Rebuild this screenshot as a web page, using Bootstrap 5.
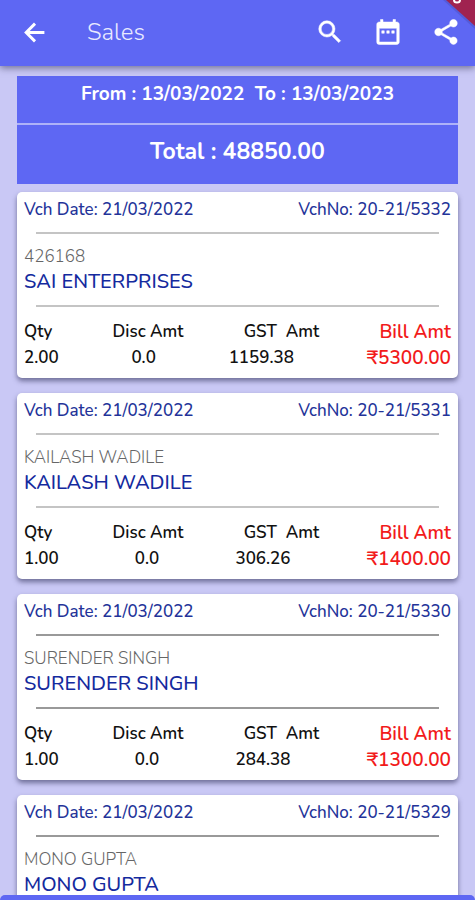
<!DOCTYPE html>
<html lang="en">
<head>
<meta charset="utf-8">
<meta name="viewport" content="width=device-width, initial-scale=1">
<title>Sales</title>
<link href="https://cdn.jsdelivr.net/npm/bootstrap@5.3.0/dist/css/bootstrap.min.css" rel="stylesheet">
<style>
  body { font-family: Nunito, "Open Sans", "Noto Sans", sans-serif; background: #c9c8f5; }
  .bg-brand { background: #5e67f3; }
  .app-header { height: 66px; padding: 0 14px 0 22px; box-shadow: 0 2px 7px rgba(40, 40, 70, .55); z-index: 2; }
  .app-header h1 { font-size: 24px; line-height: 32px; font-weight: 300; margin: -3px 0 0 40px; color: #e9eaff; }
  .icon-btn { line-height: 0; margin-top: -2px; }
  .corner-ribbon { top: 0; right: 0; z-index: 3; pointer-events: none; }
  .sales-list { padding: 10px 17px 0; }
  .period { font-size: 19px; line-height: 36px; height: 47px; white-space: pre; }
  .total { font-size: 23px; line-height: 54px; height: 59px; margin-top: 2px; box-shadow: 0 -2px 0 #aeb2f8; }
  .voucher { margin-top: 15px; padding: 6px 7px; height: 186px; border-radius: 5px; box-shadow: 0 3px 5px rgba(50, 50, 90, .6); color: #111; }
  .voucher:first-of-type { margin-top: 8px; }
  .voucher-head { font-size: 17px; line-height: 24px; font-weight: 500; color: #233399; }
  .rule { height: 2px; margin: 10px 12px 0; background: #c4c4c4; }
  .rule-dark { background: #999; }
  .ref { font-size: 17px; line-height: 24px; margin-top: 11px; font-weight: 300; color: #666; }
  .party { font-size: 20px; line-height: 26px; font-weight: 500; color: #142a9e; }
  .amounts { font-size: 17px; line-height: 26px; margin-top: 12px; }
  .amounts th, .amounts td { padding: 0; font-weight: 600; white-space: pre; }
  .amounts .bill { color: #f21b1b; font-size: 19px; }
  .bottom-bar { height: 5px; border-radius: 12px 12px 0 0; z-index: 2; }
</style>
<script src="https://cdn.jsdelivr.net/npm/bootstrap@5.3.0/dist/js/bootstrap.bundle.min.js"></script>
</head>
<body>
<div class="vh-100 d-flex flex-column overflow-hidden position-relative">
  <header class="app-header bg-brand text-white d-flex align-items-center flex-shrink-0 position-relative">
    <button class="btn p-0 border-0 text-white icon-btn" type="button" aria-label="Back">
      <svg width="25" height="25" viewBox="0 0 24 24" fill="none" stroke="currentColor" stroke-width="2.8"><path d="M21.500 12H5M12.500 3.500 4 12 12.500 20.500"/></svg>
    </button>
    <h1 class="me-auto">Sales</h1>
    <div class="d-flex align-items-center gap-4">
      <button class="btn p-0 border-0 text-white icon-btn me-1" type="button" aria-label="Search">
        <svg width="30" height="30" viewBox="0 0 24 24" fill="currentColor" stroke="currentColor" stroke-width=".4"><path d="M15.500 14h-.79l-.28-.27A6.471 6.471 0 0 0 16 9.500 6.500 6.500 0 1 0 9.500 16c1.610 0 3.090-.59 4.230-1.570l.27.28v.79l5 4.990L20.490 19l-4.990-5zm-6 0C7.010 14 5 11.990 5 9.500S7.010 5 9.500 5 14 7.010 14 9.500 11.990 14 9.500 14z"/></svg>
      </button>
      <button class="btn p-0 border-0 text-white icon-btn me-1" type="button" aria-label="Choose dates">
        <svg width="30" height="30" viewBox="0 0 24 24" fill="currentColor" stroke="currentColor" stroke-width=".4"><path d="M9 11H7v2h2v-2zm4 0h-2v2h2v-2zm4 0h-2v2h2v-2zm2-7h-1V2h-2v2H8V2H6v2H5c-1.110 0-1.990.9-1.990 2L3 20a2 2 0 0 0 2 2h14c1.100 0 2-.9 2-2V6c0-1.100-.9-2-2-2zm0 16H5V9h14v11z"/></svg>
      </button>
      <button class="btn p-0 border-0 text-white icon-btn" type="button" aria-label="Share">
        <svg width="30" height="30" viewBox="0 0 24 24" fill="currentColor" stroke="currentColor" stroke-width=".4"><path d="M18 16.080c-.76 0-1.440.3-1.960.77L8.910 12.700c.05-.23.09-.46.09-.7s-.04-.47-.09-.7l7.050-4.110c.54.5 1.250.81 2.040.81 1.660 0 3-1.340 3-3s-1.340-3-3-3-3 1.340-3 3c0 .24.04.47.09.7L8.040 9.810C7.500 9.310 6.790 9 6 9c-1.660 0-3 1.340-3 3s1.340 3 3 3c.79 0 1.500-.31 2.040-.81l7.120 4.160c-.05.21-.08.43-.08.65 0 1.610 1.310 2.920 2.920 2.920s2.920-1.310 2.920-2.920-1.310-2.920-2.920-2.920z"/></svg>
      </button>
    </div>
  </header>
  <svg class="corner-ribbon position-absolute" width="32" height="30" viewBox="0 0 32 30" aria-hidden="true"><path d="M0 0 32 29V0z" fill="#454bb5" opacity=".4"/><path d="M3 0 32 26V0z" fill="#a02350"/><ellipse cx="14" cy="0" rx="3" ry="2.500" fill="none" stroke="#fff" stroke-width="2"/></svg>

  <main class="sales-list flex-grow-1 overflow-hidden">
    <div class="period bg-brand text-white fw-bold text-center">From : 13/03/2022  To : 13/03/2023</div>
    <div class="total bg-brand text-white fw-bold text-center">Total : 48850.00</div>

    <article class="voucher bg-white">
      <div class="voucher-head d-flex justify-content-between"><span>Vch Date: 21/03/2022</span><span>VchNo: 20-21/5332</span></div>
      <div class="rule"></div>
      <div class="ref">426168</div>
      <div class="party">SAI ENTERPRISES</div>
      <div class="rule"></div>
      <table class="amounts d-block">
        <thead class="d-block"><tr class="d-flex justify-content-between"><th>Qty</th><th>Disc Amt</th><th>GST  Amt</th><th class="bill">Bill Amt</th></tr></thead>
        <tbody class="d-block"><tr class="d-flex justify-content-between"><td>2.00</td><td>0.0</td><td>1159.38</td><td class="bill">₹5300.00</td></tr></tbody>
      </table>
    </article>

    <article class="voucher bg-white">
      <div class="voucher-head d-flex justify-content-between"><span>Vch Date: 21/03/2022</span><span>VchNo: 20-21/5331</span></div>
      <div class="rule"></div>
      <div class="ref">KAILASH WADILE</div>
      <div class="party">KAILASH WADILE</div>
      <div class="rule"></div>
      <table class="amounts d-block">
        <thead class="d-block"><tr class="d-flex justify-content-between"><th>Qty</th><th>Disc Amt</th><th>GST  Amt</th><th class="bill">Bill Amt</th></tr></thead>
        <tbody class="d-block"><tr class="d-flex justify-content-between"><td>1.00</td><td>0.0</td><td>306.26</td><td class="bill">₹1400.00</td></tr></tbody>
      </table>
    </article>

    <article class="voucher bg-white">
      <div class="voucher-head d-flex justify-content-between"><span>Vch Date: 21/03/2022</span><span>VchNo: 20-21/5330</span></div>
      <div class="rule rule-dark"></div>
      <div class="ref">SURENDER SINGH</div>
      <div class="party">SURENDER SINGH</div>
      <div class="rule rule-dark"></div>
      <table class="amounts d-block">
        <thead class="d-block"><tr class="d-flex justify-content-between"><th>Qty</th><th>Disc Amt</th><th>GST  Amt</th><th class="bill">Bill Amt</th></tr></thead>
        <tbody class="d-block"><tr class="d-flex justify-content-between"><td>1.00</td><td>0.0</td><td>284.38</td><td class="bill">₹1300.00</td></tr></tbody>
      </table>
    </article>

    <article class="voucher bg-white">
      <div class="voucher-head d-flex justify-content-between"><span>Vch Date: 21/03/2022</span><span>VchNo: 20-21/5329</span></div>
      <div class="rule rule-dark"></div>
      <div class="ref">MONO GUPTA</div>
      <div class="party">MONO GUPTA</div>
    </article>
  </main>
  <div class="bottom-bar bg-brand fixed-bottom"></div>
</div>
</body>
</html>
